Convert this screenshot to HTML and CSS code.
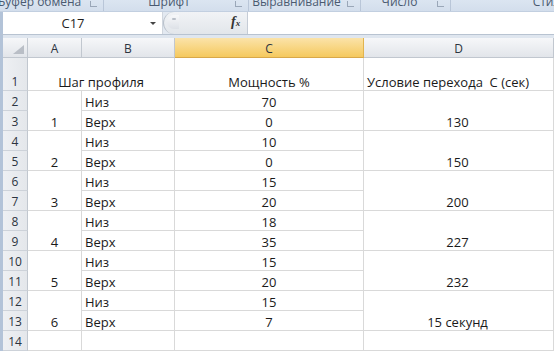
FILE: index.html
```html
<!DOCTYPE html>
<html>
<head>
<meta charset="utf-8">
<link rel="stylesheet" href="styles.css">
</head>
<body>
<div class="ribbon">
  <div class="grp g1"><span class="lbl">Буфер обмена</span><span class="launch"></span></div>
  <div class="grp g2"><span class="lbl">Шрифт</span><span class="launch"></span></div>
  <div class="grp g3"><span class="lbl">Выравнивание</span><span class="launch"></span></div>
  <div class="grp g4"><span class="lbl">Число</span><span class="launch"></span></div>
  <div class="grp g5"><span class="lbl">Стили</span></div>
</div>
<div class="fbar">
  <div class="namebox"><span class="name">C17</span><span class="dd"></span></div>
  <div class="grip">
    <span class="knob"><span class="dot"></span></span>
    <span class="fx">f<sub>x</sub></span>
  </div>
  <div class="input"></div>
</div>
<div class="gap"></div>
<div class="sheet">
  <div class="hd corner"><svg width="11" height="9" viewBox="0 0 11 9"><polygon points="11,0 11,9 0,9" fill="#b9bec6"/></svg></div>
  <div class="hd col">A</div>
  <div class="hd col">B</div>
  <div class="hd col sel">C</div>
  <div class="hd col wide">D</div>

  <div class="hd row r1">1</div>
  <div class="c ab ctr">Шаг профиля</div>
  <div class="c ctr">Мощность %</div>
  <div class="c left wide">Условие перехода&nbsp; С (сек)</div>

  <div class="hd row">2</div>
  <div class="c m ctr">1</div>
  <div class="c left">Низ</div>
  <div class="c ctr">70</div>
  <div class="c m ctr wide">130</div>
  <div class="hd row">3</div>
  <div class="c left">Верх</div>
  <div class="c ctr">0</div>

  <div class="hd row">4</div>
  <div class="c m ctr">2</div>
  <div class="c left">Низ</div>
  <div class="c ctr">10</div>
  <div class="c m ctr wide">150</div>
  <div class="hd row">5</div>
  <div class="c left">Верх</div>
  <div class="c ctr">0</div>

  <div class="hd row">6</div>
  <div class="c m ctr">3</div>
  <div class="c left">Низ</div>
  <div class="c ctr">15</div>
  <div class="c m ctr wide">200</div>
  <div class="hd row">7</div>
  <div class="c left">Верх</div>
  <div class="c ctr">20</div>

  <div class="hd row">8</div>
  <div class="c m ctr">4</div>
  <div class="c left">Низ</div>
  <div class="c ctr">18</div>
  <div class="c m ctr wide">227</div>
  <div class="hd row">9</div>
  <div class="c left">Верх</div>
  <div class="c ctr">35</div>

  <div class="hd row">10</div>
  <div class="c m ctr">5</div>
  <div class="c left">Низ</div>
  <div class="c ctr">15</div>
  <div class="c m ctr wide">232</div>
  <div class="hd row">11</div>
  <div class="c left">Верх</div>
  <div class="c ctr">20</div>

  <div class="hd row">12</div>
  <div class="c m ctr">6</div>
  <div class="c left">Низ</div>
  <div class="c ctr">15</div>
  <div class="c m ctr wide">15 секунд</div>
  <div class="hd row">13</div>
  <div class="c left">Верх</div>
  <div class="c ctr">7</div>

  <div class="hd row">14</div>
  <div class="c"></div>
  <div class="c"></div>
  <div class="c"></div>
  <div class="c wide"></div>
</div>
</body>
</html>
```

FILE: styles.css
```css
html, body {
  margin: 0;
  padding: 0;
}
body {
  width: 554px;
  height: 351px;
  overflow: hidden;
  background: #ffffff;
  font-family: "Open Sans", "Liberation Sans", sans-serif;
}
.ribbon {
  height: 11px;
  display: flex;
  overflow: hidden;
  background: linear-gradient(#dbe5f1, #d3deec);
  border-bottom: 1px solid #c2cfe0;
}
.grp {
  position: relative;
  display: flex;
  justify-content: center;
  border-right: 1px solid #b9c6d8;
  box-sizing: border-box;
  height: 11px;
}
.g1 { width: 104px; padding-right: 18px; justify-content: flex-start; }
.g2 { width: 145px; padding-right: 14px; }
.g3 { width: 112px; padding-right: 16px; }
.g4 { width: 90px; padding-right: 12px; }
.g5 { width: 103px; border-right: none; justify-content: flex-end; padding-right: 0; }
.lbl {
  font-size: 12px;
  line-height: 12px;
  margin-top: -4px;
  color: #4a5a70;
  white-space: nowrap;
}
.g1 .lbl { margin-left: -2px; }
.g5 .lbl { margin-right: -14px; }
.launch {
  position: absolute;
  right: 6px;
  top: 1px;
  width: 6px;
  height: 5px;
  border-left: 1px solid #9aa7b8;
  border-bottom: 1px solid #9aa7b8;
}
.fbar {
  height: 22px;
  display: flex;
  background: #e3e9f1;
  border-left: 3px solid #b3c3d8;
  border-bottom: 1px solid #b8c3d1;
}
.namebox {
  width: 159px;
  background: #ffffff;
  position: relative;
  display: flex;
  align-items: center;
  border-right: 1px solid #d0d6de;
}
.name {
  width: 140px;
  text-align: center;
  font-size: 13px;
  color: #1f1f1f;
}
.dd {
  position: absolute;
  left: 147px;
  top: 10px;
  border-left: 3px solid transparent;
  border-right: 3px solid transparent;
  border-top: 3px solid #444;
}
.grip {
  width: 85px;
  position: relative;
  background: linear-gradient(#f1f3f6, #e2e6eb);
  border-radius: 11px 0 0 11px;
  border-left: 1px solid #b9c1cb;
  border-right: 1px solid #c5ccd6;
  display: flex;
  align-items: center;
  box-sizing: border-box;
}
.knob {
  position: absolute;
  left: 3px;
  top: 3px;
  width: 12px;
  height: 14px;
  border-radius: 7px 0 0 7px;
  background: linear-gradient(#f7f8fa, #dde1e7);
}
.dot {
  position: absolute;
  left: 5px;
  top: 3px;
  width: 4px;
  height: 2px;
  border-radius: 2px;
  background: #b9bfc8;
}
.fx {
  position: absolute;
  left: 67px;
  top: 2px;
  font-family: "Liberation Serif", serif;
  font-style: italic;
  font-weight: bold;
  font-size: 14px;
  color: #333;
}
.fx sub {
  font-size: 9px;
  vertical-align: 0;
}
.input {
  flex: 1;
  background: #ffffff;
}
.gap {
  height: 3px;
  background: #dfe6ef;
  border-left: 3px solid #b3c3d8;
}
.sheet {
  display: grid;
  grid-template-columns: 25px 54px 93px 189px 189px 1px;
  grid-template-rows: 20px 33px repeat(13, 20px);
  border-left: 3px solid #b3c3d8;
  width: 551px;
}
.hd {
  box-sizing: border-box;
  font-family: "Open Sans", "Liberation Sans", sans-serif;
  font-size: 12px;
  color: #2c3440;
  display: flex;
  align-items: center;
  justify-content: center;
  border-right: 1px solid #c1c7cf;
  border-bottom: 1px solid #c1c7cf;
}
.col {
  background: linear-gradient(#f6f7f9, #e2e5ea);
  padding-top: 1px;
}
.corner {
  background: linear-gradient(#f6f7f9, #e2e5ea);
  align-items: flex-end;
  justify-content: flex-end;
  padding: 0 3px 3px 0;
}
.sel {
  background: linear-gradient(#fbe3a9, #f5c95e);
  border-right-color: #e1b44f;
  border-bottom-color: #d8a84a;
}
.row {
  grid-column: 1;
  background: linear-gradient(90deg, #eef0f3, #e4e7eb);
  border-bottom-color: #cdd2d9;
  align-items: flex-end;
  line-height: 15px;
  padding-bottom: 1px;
}
.c {
  box-sizing: border-box;
  font-family: "Open Sans", "Liberation Sans", sans-serif;
  font-size: 13px;
  line-height: 15px;
  color: #1a1a1a;
  display: flex;
  align-items: flex-end;
  padding-bottom: 0;
  border-right: 1px solid #d9d9d9;
  border-bottom: 1px solid #d9d9d9;
  white-space: nowrap;
  overflow: hidden;
}
.ctr { justify-content: center; }
.left { justify-content: flex-start; padding-left: 3px; }
.ab { grid-column: span 2; }
.m { grid-row: span 2; }
.wide { grid-column: span 2; }
.c.wide { padding-right: 1px; }
.c.ctr.wide { padding-right: 2px; }
```
